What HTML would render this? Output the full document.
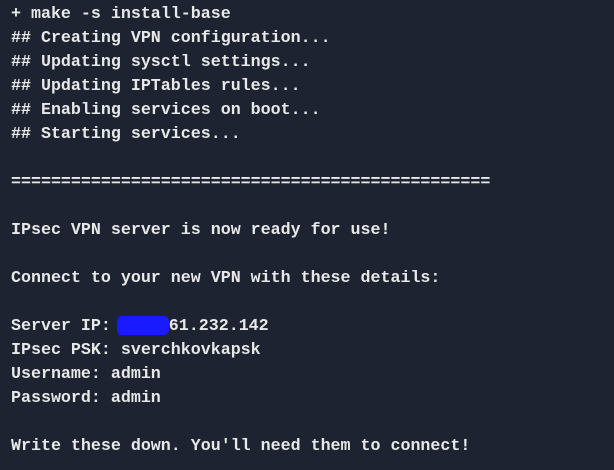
<!DOCTYPE html>
<html><head><style>
html,body{margin:0;padding:0;background:#1d2330;width:614px;height:470px;overflow:hidden}
pre{margin:0;padding:2px 0 0 11px;font-family:"Liberation Mono",monospace;font-size:16.65px;line-height:24px;color:#e8e8e8;font-weight:bold;white-space:pre}
.b{background:#1a1aff;color:#1a1aff;border-radius:5px;margin-left:-4px;padding-right:2px}
</style></head><body><pre>+ make -s install-base
## Creating VPN configuration...
## Updating sysctl settings...
## Updating IPTables rules...
## Enabling services on boot...
## Starting services...

================================================

IPsec VPN server is now ready for use!

Connect to your new VPN with these details:

Server IP: <span class="b">xxxxx</span>61.232.142
IPsec PSK: sverchkovkapsk
Username: admin
Password: admin

Write these down. You'll need them to connect!</pre></body></html>
